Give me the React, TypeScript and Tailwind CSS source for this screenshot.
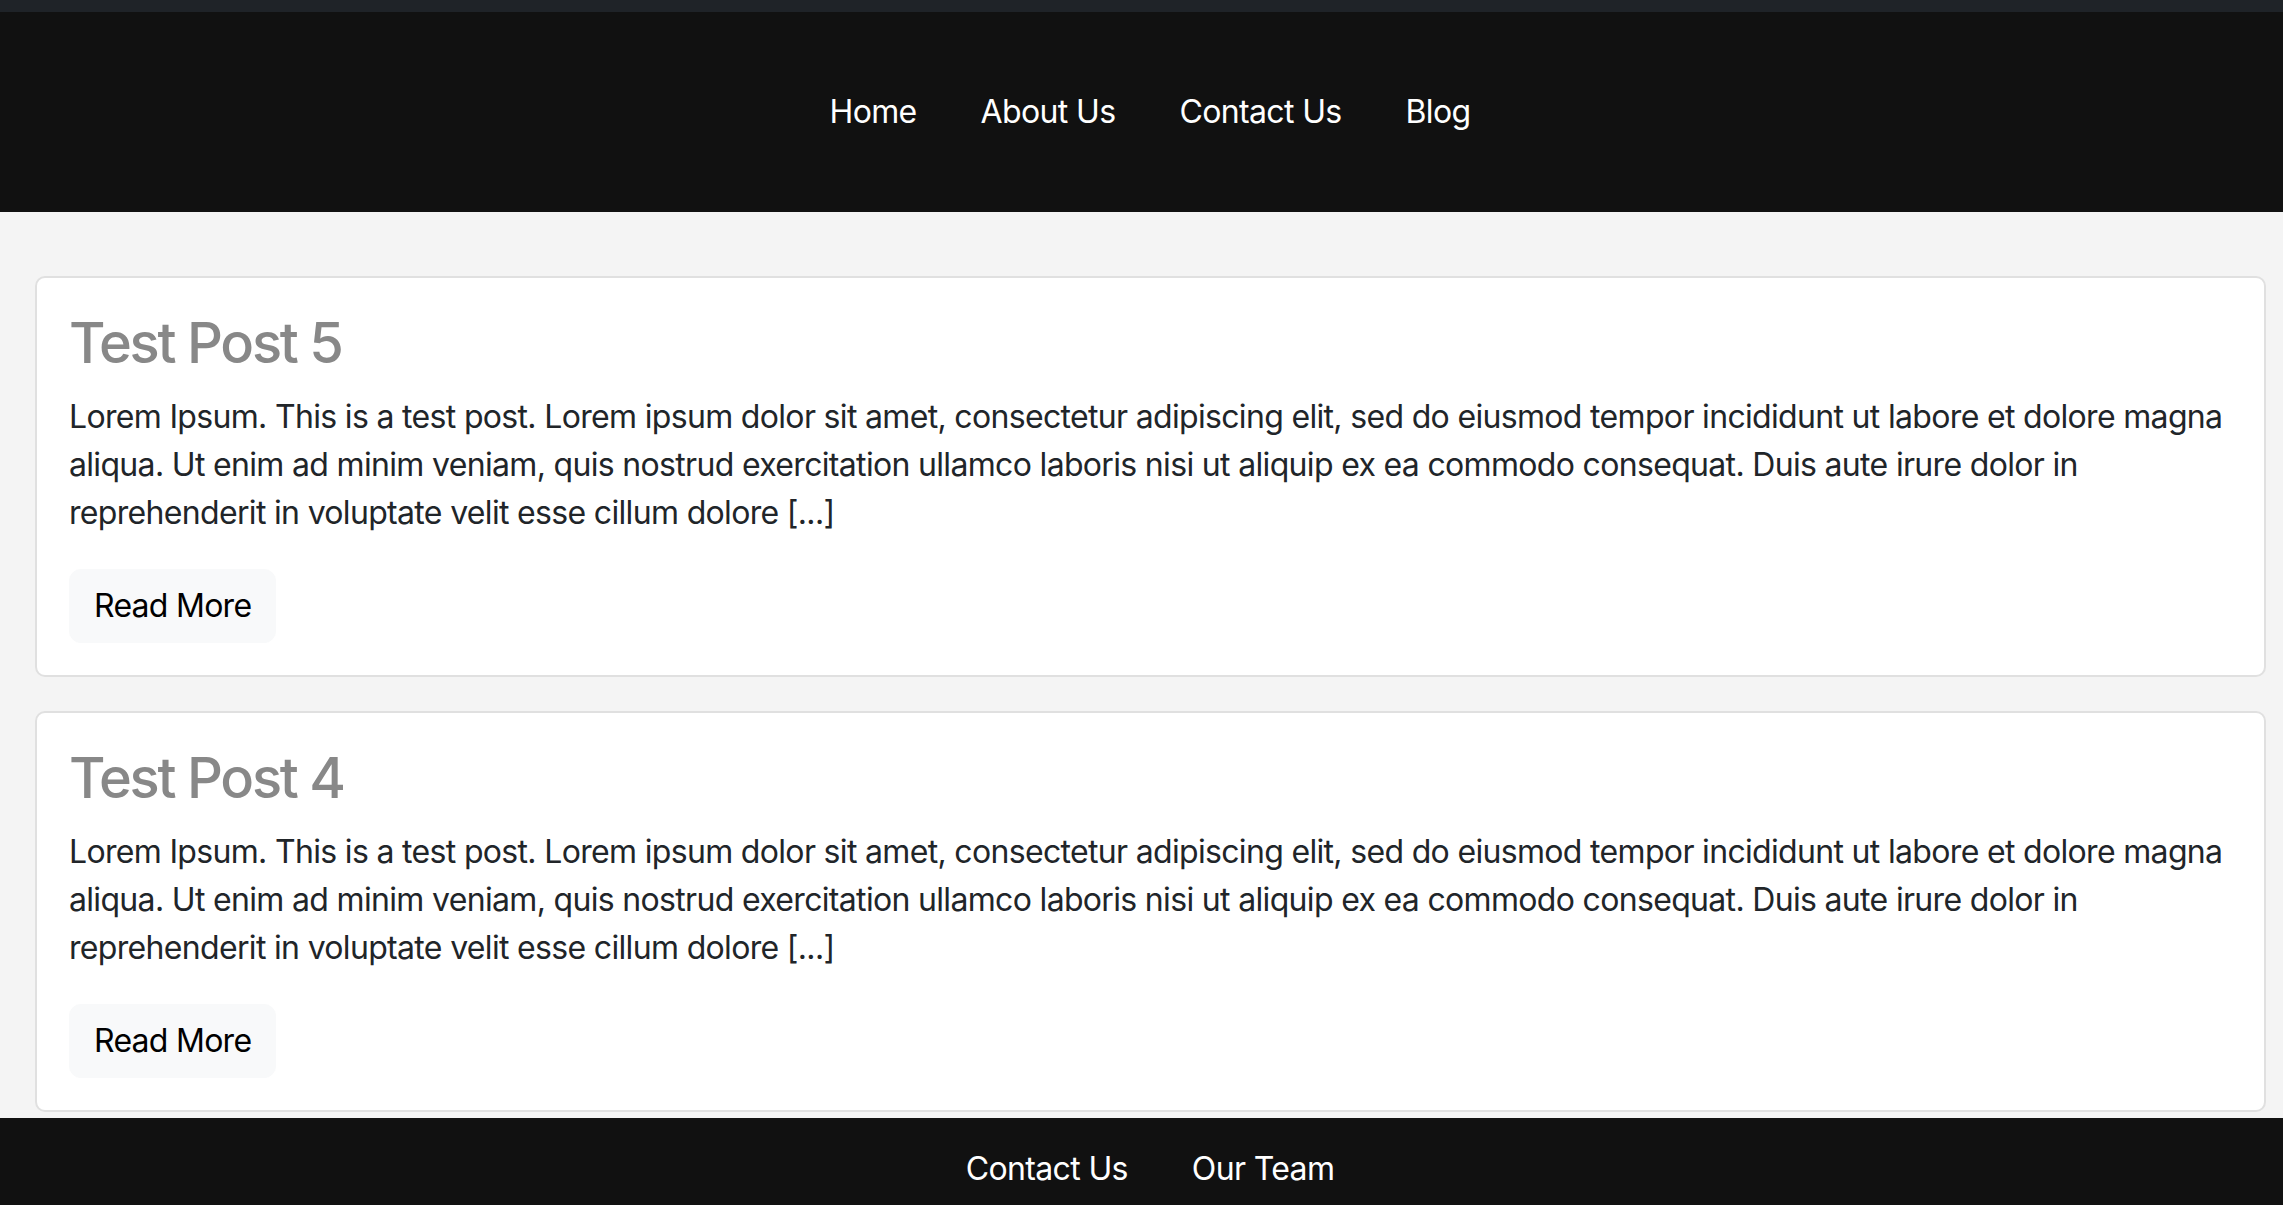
import React from "react";

const body =
  "Lorem Ipsum. This is a test post. Lorem ipsum dolor sit amet, consectetur adipiscing elit, sed do eiusmod tempor incididunt ut labore et dolore magna aliqua. Ut enim ad minim veniam, quis nostrud exercitation ullamco laboris nisi ut aliquip ex ea commodo consequat. Duis aute irure dolor in reprehenderit in voluptate velit esse cillum dolore [...]";

function Card({ title }: { title: string }) {
  return (
    <div className="bg-white border-2 border-[#e0e0e0] rounded-[10px] px-[32px] pt-[32px] pb-[32px]">
      <h3 className="text-[56px] leading-[67px] font-medium tracking-[-0.04em] text-[#888888] mb-[16px]">{title}</h3>
      <p className="text-[32px] leading-[48px] tracking-[-0.021em] text-[#212529] mb-[32px]">{body}</p>
      <button className="bg-[#f8f9fa] border border-[#f8f9fa] rounded-[12px] px-[24px] py-[12px] text-[32px] leading-[48px] tracking-[-0.023em] text-black">
        Read More
      </button>
    </div>
  );
}

export default function App() {
  return (
    <div
      className="min-h-[1205px] bg-[#f4f4f4]"
      style={{ fontFamily: "Inter, 'Noto Sans', sans-serif" }}
    >
      <div className="h-[12px] bg-[#1f2328]" />
      <header className="h-[200px] bg-[#111111] flex items-center justify-center pl-[17px]">
        <nav className="flex gap-[64px] text-[32px] leading-[48px] tracking-[-0.02em] text-white">
          <a>Home</a>
          <a>About Us</a>
          <a>Contact Us</a>
          <a>Blog</a>
        </nav>
      </header>
      <main className="pl-[35px] pr-[17px] pt-[64px] pb-[6px] flex flex-col gap-[34px]">
        <Card title="Test Post 5" />
        <Card title="Test Post 4" />
      </main>
      <footer className="bg-[#111111] h-[200px] flex justify-center pl-[17px] pt-[27px]">
        <nav className="flex gap-[64px] text-[32px] leading-[48px] tracking-[-0.02em] text-white h-[48px]">
          <a>Contact Us</a>
          <a>Our Team</a>
        </nav>
      </footer>
    </div>
  );
}
